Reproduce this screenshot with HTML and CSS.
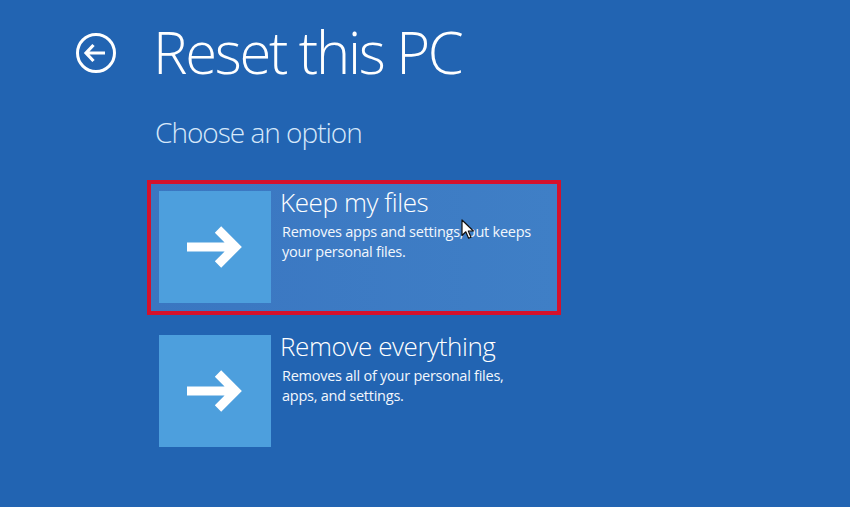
FILE: index.html
```html
<!DOCTYPE html>
<html lang="en">
<head>
  <meta charset="UTF-8">
  <meta name="viewport" content="width=device-width, initial-scale=1.0">
  <title>Reset this PC</title>
  <link rel="stylesheet" href="styles.css">
</head>
<body>
  <header class="top">
    <button class="back" aria-label="Back">
      <svg width="40" height="40" viewBox="0 0 40 40">
        <circle cx="20" cy="20" r="18.5" fill="none" stroke="#fff" stroke-width="3"/>
        <path d="M10 20 H29 M17.5 12 L10 20 L17.5 28" fill="none" stroke="#fff" stroke-width="3.2" stroke-linejoin="miter"/>
      </svg>
    </button>
    <h1>Reset this PC</h1>
  </header>

  <main class="options">
    <h2>Choose an option</h2>

    <div class="option selected">
      <div class="tile">
        <svg width="58" height="44" viewBox="0 0 58 44">
          <path d="M1 22 H49 M32 4.5 L49.5 22 L32 39.5" fill="none" stroke="#fff" stroke-width="9" stroke-linejoin="miter"/>
        </svg>
      </div>
      <div class="text">
        <h3>Keep my files</h3>
        <p>Removes apps and settings, but keeps your personal files.</p>
      </div>
      <!-- mouse pointer -->
      <svg class="pointer" width="14" height="21" viewBox="0 0 14 21">
        <path d="M1 1 L1 16.5 L4.8 12.8 L7.6 19.2 L10 18.2 L7.3 12 L12.4 12 Z" fill="#fff" stroke="#111" stroke-width="1.2" stroke-linejoin="round"/>
      </svg>
    </div>

    <div class="option">
      <div class="tile">
        <svg width="58" height="44" viewBox="0 0 58 44">
          <path d="M1 22 H49 M32 4.5 L49.5 22 L32 39.5" fill="none" stroke="#fff" stroke-width="9" stroke-linejoin="miter"/>
        </svg>
      </div>
      <div class="text">
        <h3>Remove everything</h3>
        <p>Removes all of your personal files, apps, and settings.</p>
      </div>
    </div>
  </main>
</body>
</html>
```

FILE: styles.css
```css
body {
  margin: 0;
  padding: 0;
  height: 507px;
  overflow: hidden;
  background: #2264b2;
  color: #fff;
  font-family: "Open Sans", "Noto Sans", sans-serif;
}
.top {
  display: flex;
  align-items: flex-start;
  padding: 22px 0 0 76px;
}
.back {
  margin: 11px 37px 0 0;
  padding: 0;
  border: 0;
  background: none;
  width: 40px;
  height: 40px;
  cursor: pointer;
}
.back svg {
  display: block;
}
h1 {
  margin: 0;
  font-size: 58px;
  line-height: 60px;
  font-weight: 300;
  letter-spacing: -2.3px;
}
.options {
  display: flex;
  flex-direction: column;
  align-items: flex-start;
  padding-left: 147px;
}
h2 {
  margin: 33px 0 31px 8px;
  font-size: 28px;
  line-height: 34px;
  font-weight: 300;
  letter-spacing: -1px;
  color: #d6e8fa;
}
.option {
  position: relative;
  display: flex;
  width: 398px;
  padding: 7px 0 8px 8px;
  border: 4px solid transparent;
  margin-bottom: 9px;
}
.option.selected {
  border-color: #d5112c;
  background: linear-gradient(90deg, #3a76c1, #3f7fc6);
}
.tile {
  flex: none;
  width: 112px;
  height: 112px;
  background: #4d9fdd;
  display: flex;
  justify-content: center;
  align-items: center;
}
.text {
  padding-left: 9px;
}
h3 {
  margin: -2px 0 0;
  font-size: 26px;
  line-height: 26px;
  font-weight: 300;
  letter-spacing: -0.4px;
}
.text p {
  margin: 7px 0 0 2px;
  width: 254px;
  font-size: 14.5px;
  line-height: 20px;
  letter-spacing: -0.25px;
  color: #f2f7fd;
}
.pointer {
  position: absolute;
  left: 310px;
  top: 35px;
}
```
